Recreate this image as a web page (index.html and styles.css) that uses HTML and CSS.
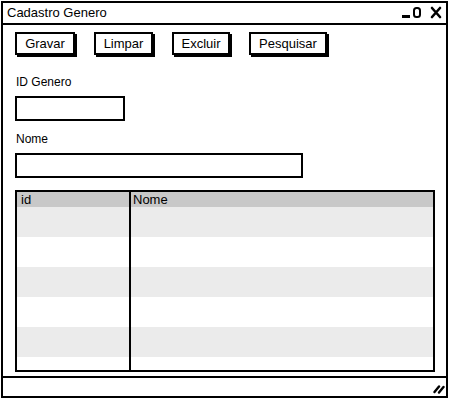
FILE: index.html
```html
<!DOCTYPE html>
<html lang="pt">
<head>
    <meta charset="UTF-8">
    <meta name="viewport" content="width=device-width, initial-scale=1.0">
    <title>Cadastro Genero</title>
    <link rel="stylesheet" href="styles.css">
</head>
<body>

<div class="window">
    <!-- Title bar -->
    <div class="titlebar">
        <span class="title">Cadastro Genero</span>
        <svg class="controls" width="44" height="14" viewBox="0 0 44 14">
            <rect x="1" y="9" width="8" height="3" fill="#000"/>
            <rect x="13" y="2" width="6" height="9" rx="2.5" fill="none" stroke="#000" stroke-width="2"/>
            <path d="M31 2 L39 11 M39 2 L31 11" stroke="#000" stroke-width="2.6" stroke-linecap="round"/>
        </svg>
    </div>

    <div class="content">
        <!-- Toolbar -->
        <div class="toolbar">
            <button class="btn btn-gravar">Gravar</button>
            <button class="btn btn-limpar">Limpar</button>
            <button class="btn btn-excluir">Excluir</button>
            <button class="btn btn-pesquisar">Pesquisar</button>
        </div>

        <!-- ID Genero -->
        <div class="form-section first">
            <label for="idGenero">ID Genero</label>
            <div class="input input-short" id="idGenero"></div>
        </div>

        <!-- Nome -->
        <div class="form-section">
            <label for="nome">Nome</label>
            <div class="input input-long" id="nome"></div>
        </div>

        <!-- Grid -->
        <div class="grid">
            <div class="row header">
                <div class="cell col-id">id</div>
                <div class="cell col-nome">Nome</div>
            </div>
            <div class="row odd"><div class="cell col-id"></div><div class="cell col-nome"></div></div>
            <div class="row"><div class="cell col-id"></div><div class="cell col-nome"></div></div>
            <div class="row odd"><div class="cell col-id"></div><div class="cell col-nome"></div></div>
            <div class="row"><div class="cell col-id"></div><div class="cell col-nome"></div></div>
            <div class="row odd"><div class="cell col-id"></div><div class="cell col-nome"></div></div>
            <div class="row last"><div class="cell col-id"></div><div class="cell col-nome"></div></div>
        </div>
    </div>

    <!-- Status bar -->
    <div class="statusbar">
        <svg class="grip" width="12" height="10" viewBox="0 0 12 10">
            <path d="M1.5 8 L6 2.5 M6 8.5 L10.5 3" stroke="#000" stroke-width="2.4" stroke-linecap="round"/>
        </svg>
    </div>
</div>

</body>
</html>
```

FILE: styles.css
```css
body {
    font-family: "Liberation Sans", Arial, sans-serif;
    background-color: #fff;
    color: #000;
    margin: 0;
    padding: 0;
}
.window {
    box-sizing: border-box;
    width: 447px;
    height: 397px;
    margin: 1px 0 0 1px;
    border: 2px solid #000;
    display: flex;
    flex-direction: column;
    background-color: #fff;
}
.titlebar {
    height: 20px;
    border-bottom: 2px solid #000;
    display: flex;
    align-items: center;
    justify-content: space-between;
    padding: 0 0 0 4px;
}
.title {
    font-size: 13px;
    line-height: 20px;
}
.controls {
    margin-right: 1px;
}
.content {
    flex: 1;
    padding: 7px 0 0 12px;
    display: flex;
    flex-direction: column;
}
.toolbar {
    display: flex;
    gap: 19px;
}
.btn {
    box-sizing: border-box;
    height: 23px;
    padding: 0;
    background-color: #fff;
    border: 2px solid #000;
    box-shadow: 2px 2px 0 #000;
    font-family: "Liberation Sans", Arial, sans-serif;
    font-size: 13px;
    color: #000;
}
.btn-gravar { width: 60px; }
.btn-limpar { width: 59px; }
.btn-excluir { width: 58px; }
.btn-pesquisar { width: 78px; }
.form-section {
    display: flex;
    flex-direction: column;
    margin-top: 11px;
}
.form-section.first {
    margin-top: 20px;
}
label {
    font-size: 12px;
    line-height: 14px;
    margin-bottom: 7px;
    padding-left: 1px;
}
.input {
    box-sizing: border-box;
    height: 25px;
    border: 2px solid #000;
    background-color: #fff;
}
.input-short { width: 110px; }
.input-long { width: 288px; }
.grid {
    box-sizing: border-box;
    width: 420px;
    height: 182px;
    margin-top: 12px;
    border: 2px solid #000;
    display: flex;
    flex-direction: column;
    overflow: hidden;
}
.row {
    display: flex;
    height: 30px;
    flex-shrink: 0;
}
.row.header {
    height: 15px;
    background-color: #c8c8c8;
    font-size: 13px;
    line-height: 15px;
}
.row.odd {
    background-color: #ebebeb;
}
.row.last {
    flex: 1;
    height: auto;
}
.col-id {
    width: 112px;
    border-right: 2px solid #000;
    padding-left: 4px;
    box-sizing: border-box;
    width: 114px;
}
.col-nome {
    flex: 1;
    padding-left: 2px;
}
.statusbar {
    height: 18px;
    margin-top: 4px;
    border-top: 2px solid #000;
    display: flex;
    justify-content: flex-end;
    align-items: flex-end;
}
.grip {
    margin: 0 1px 2px 0;
}
```
